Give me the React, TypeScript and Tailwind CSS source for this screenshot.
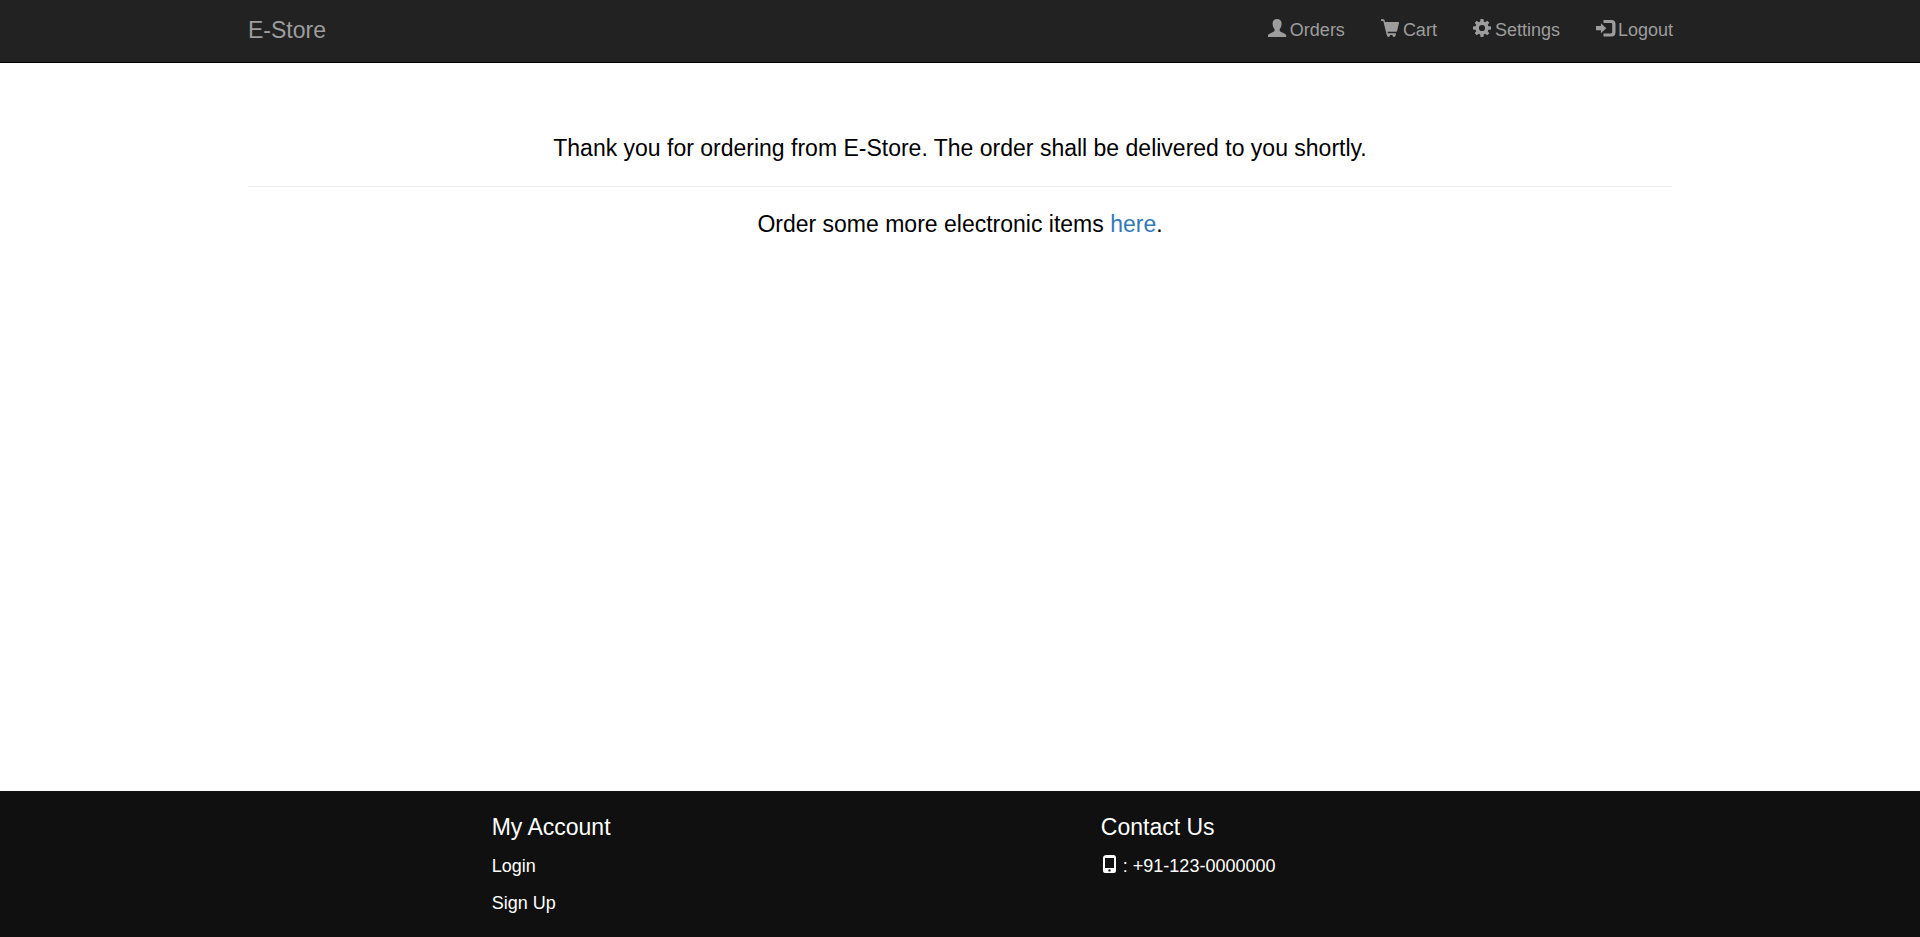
import type { ReactNode } from 'react';

function Icon({ children }: { children: ReactNode }) {
  return (
    <svg
      viewBox="0 0 18 18"
      className="h-[18px] w-[18px] shrink-0 overflow-visible"
      fill="currentColor"
      aria-hidden="true"
    >
      {children}
    </svg>
  );
}

function UserIcon() {
  return (
    <Icon>
      <path d="M9 0C6.300 0 4.600 1.700 4.600 4.200C4.600 6.800 5.300 8.800 6.500 10.100V11.500C6.500 12.200 6.100 12.500 5.500 12.800L1.500 14.700C.6 15.200 0 15.700 0 16.600V18H18.200V16.600C18.200 15.700 17.600 15.200 16.700 14.700L12.700 12.800C12.100 12.500 11.700 12.200 11.700 11.500V10.100C12.900 8.800 13.600 6.800 13.600 4.200C13.600 1.700 11.900 0 9 0Z" />
    </Icon>
  );
}

function CartIcon() {
  return (
    <Icon>
      <path d="M0 .3H2.600C3.100 .3 3.400 .5 3.500 1L4 2.900H17.300C17.900 2.900 18.200 3.300 18 3.900L16.100 12C16 12.500 15.700 12.700 15.300 12.700H6.500L6.900 14.300H14.300C15.300 14.300 15.300 16 14.300 16H6.300C5.900 16 5.700 15.800 5.600 15.400L2.300 1.900H0Z" />
      <path d="M6 15.500H9V16.600C9 18.400 6 18.400 6 16.600Z" />
      <path d="M11.500 15.500H14.500V16.600C14.500 18.400 11.500 18.400 11.500 16.600Z" />
    </Icon>
  );
}

function CogIcon() {
  return (
    <Icon>
      <path
        fillRule="evenodd"
        d="M7.600 0H10.400L10.800 2.600L12.200 3.200L14.300 1.700L16.300 3.700L14.800 5.800L15.400 7.200L18 7.600V10.400L15.400 10.800L14.800 12.200L16.300 14.300L14.300 16.300L12.200 14.800L10.800 15.400L10.400 18H7.600L7.200 15.400L5.800 14.800L3.700 16.300L1.700 14.300L3.200 12.200L2.600 10.800L0 10.400V7.600L2.600 7.200L3.200 5.800L1.700 3.700L3.700 1.700L5.800 3.200L7.200 2.600ZM9 5.900A3.100 3.100 0 1 0 9 12.100A3.100 3.100 0 1 0 9 5.900Z"
      />
    </Icon>
  );
}

function LogoutIcon() {
  return (
    <Icon>
      <path d="M7.500 1H15.500C18.100 1 19.500 2.400 19.500 5V13.500C19.500 16.100 18.100 17.500 15.500 17.500H7.500V14.400H14.800C15.700 14.400 16.200 13.900 16.200 13V5.500C16.200 4.600 15.700 4.100 14.800 4.100H7.500Z" />
      <path d="M4.900 4.200L10.300 9.200L4.900 14.200V11.300H0V7.100H4.900Z" />
    </Icon>
  );
}

function PhoneIcon() {
  return (
    <Icon>
      <path
        fillRule="evenodd"
        d="M5.500 1H12.500C14 1 15 2.200 15 3.800V16.600C15 18.200 14.400 19 13 19H4C2.600 19 2 18.200 2 16.600V3.800C2 2.200 3.600 1 5.500 1ZM4 4V14H13V4ZM8.500 15.200A1.200 1.200 0 1 0 8.500 17.600A1.200 1.200 0 1 0 8.500 15.200Z"
      />
    </Icon>
  );
}

const links = [
  { label: 'Orders', icon: <UserIcon /> },
  { label: 'Cart', icon: <CartIcon /> },
  { label: 'Settings', icon: <CogIcon /> },
  { label: 'Logout', icon: <LogoutIcon /> },
];

export default function App() {
  return (
    <div className="flex min-h-screen flex-col bg-white font-['Liberation_Sans',Arial,sans-serif] text-[18px] leading-6 text-black">
      <header className="border-b border-black bg-[#222222] text-[#9d9d9d]">
        <nav className="mx-auto flex w-full max-w-[1462px] items-start justify-between pr-[18px] pl-[19px]">
          <a href="#" className="py-[17px] text-[23px] leading-[26px] hover:text-white">
            E-Store
          </a>
          <ul className="flex gap-9">
            {links.map(({ label, icon }) => (
              <li key={label}>
                <a href="#" className="flex items-start gap-1 pt-[19px] pb-[21px] hover:text-white">
                  {icon}
                  <span className="leading-[22px]">{label}</span>
                </a>
              </li>
            ))}
          </ul>
        </nav>
      </header>

      <main className="mx-auto w-full max-w-[1462px] grow px-[19px] pt-[72px] text-center text-[23px] leading-[26px]">
        <p>Thank you for ordering from E-Store. The order shall be delivered to you shortly.</p>
        <hr className="mt-[25px] mb-6 border-[#eeeeee]" />
        <p>
          Order some more electronic items{' '}
          <a href="#" className="text-[#337ab7] hover:underline">
            here
          </a>
          .
        </p>
      </main>

      <footer className="bg-[#101010] text-white">
        <div className="mx-auto grid w-full max-w-[1462px] grid-cols-12 pt-[23px] pb-[21px]">
          <section className="col-span-5 col-start-3 px-[19px]">
            <h2 className="text-[23px] leading-[26px]">My Account</h2>
            <ul className="mt-[14px] space-y-3">
              <li>
                <a href="#" className="block leading-[25px] hover:underline">
                  Login
                </a>
              </li>
              <li>
                <a href="#" className="block leading-[25px] hover:underline">
                  Sign Up
                </a>
              </li>
            </ul>
          </section>
          <section className="col-span-5 px-[19px]">
            <h2 className="text-[23px] leading-[26px]">Contact Us</h2>
            <p className="mt-[14px] flex items-start gap-1 leading-[25px]">
              <PhoneIcon />
              <span>: +91-123-0000000</span>
            </p>
          </section>
        </div>
      </footer>
    </div>
  );
}
